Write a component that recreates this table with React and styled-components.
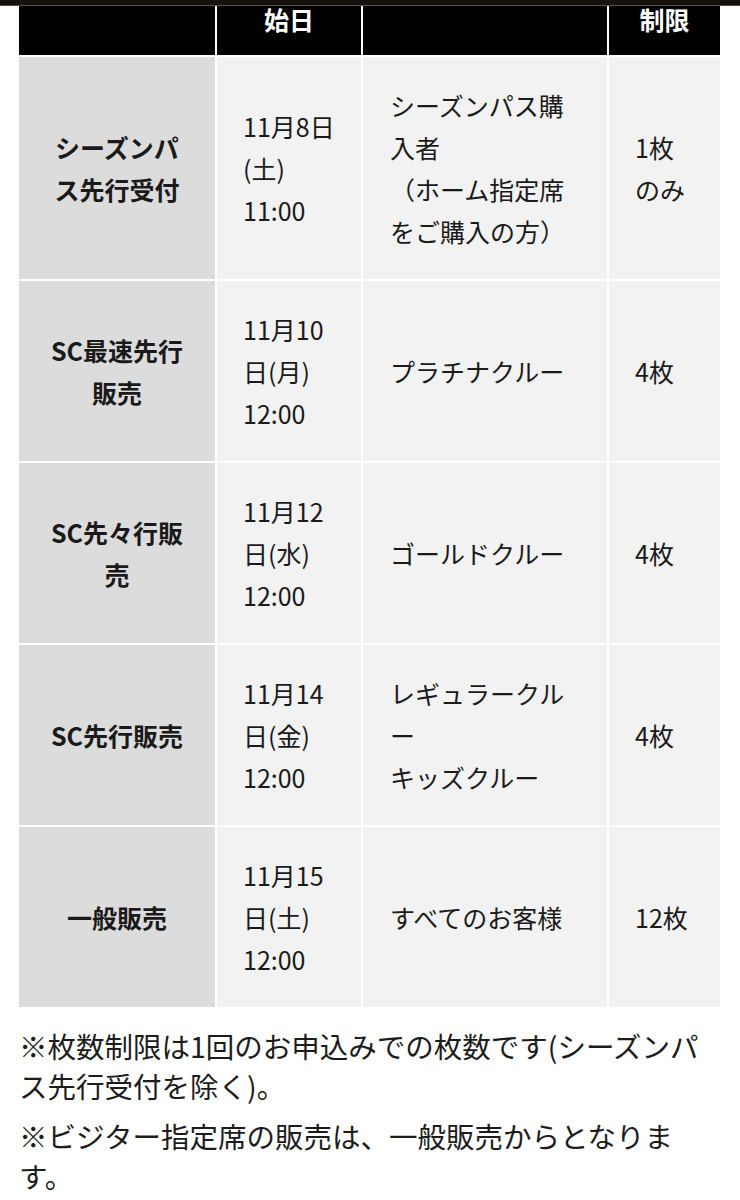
import React from "react";
import styled, { createGlobalStyle } from "styled-components";

const Global = createGlobalStyle`
  html, body { margin: 0; padding: 0; background: #ffffff; }
  body {
    font-family: "Noto Sans CJK JP", "Noto Sans", sans-serif;
    color: #1a1a1a;
  }
`;

const Page = styled.div`
  width: 740px;
  height: 1200px;
  overflow: hidden;
  display: flex;
  flex-direction: column;
`;

const TopBar = styled.div`
  height: 5px;
  flex: none;
  background: #17110d;
  border-bottom: 1px solid #57524d;
`;

const Content = styled.div`
  padding: 0 20px 0 19px;
  display: flex;
  flex-direction: column;
`;

const Table = styled.div`
  display: flex;
  flex-direction: column;
  gap: 2px;
`;

const Row = styled.div`
  display: grid;
  grid-template-columns: 196px 144px 244px 111px;
  column-gap: 2px;
`;

const HeadCell = styled.div`
  height: 49px;
  background: #000;
  color: #fff;
  font-weight: 700;
  font-size: 25px;
  line-height: 27px;
  text-align: center;
  padding-top: 0;
  box-sizing: border-box;
  white-space: nowrap;
`;

const Cell = styled.div`
  display: flex;
  align-items: center;
  justify-content: ${(p) => (p.$center ? "center" : "flex-start")};
  text-align: ${(p) => (p.$center ? "center" : "left")};
  background: ${(p) => (p.$label ? "#dcdcdc" : "#f2f2f2")};
  font-weight: ${(p) => (p.$label ? 700 : 400)};
  font-size: 25px;
  line-height: 42px;
  padding: 27px ${(p) => (p.$center ? "0" : "26px")};
  padding-left: ${(p) => (p.$center ? "0" : p.$pl || "26px")};
  white-space: nowrap;
  box-sizing: border-box;
  color: #1a1a1a;
`;

const Notes = styled.div`
  margin-top: 19px;
  display: flex;
  flex-direction: column;
  gap: 10px;
`;

const Note = styled.p`
  margin: 0;
  font-size: 28.5px;
  line-height: 40px;
  white-space: nowrap;
  color: #1c1c1c;
`;

const Lines = ({ lines }) =>
  lines.map((l, i) => (
    <React.Fragment key={i}>
      {i > 0 && <br />}
      {l}
    </React.Fragment>
  ));

const rows = [
  {
    label: ["シーズンパ", "ス先行受付"],
    date: ["11月8日", "(土)", "11:00"],
    target: ["シーズンパス購", "入者", "（ホーム指定席", "をご購入の方）"],
    limit: ["1枚", "のみ"],
  },
  {
    label: ["SC最速先行", "販売"],
    date: ["11月10", "日(月)", "12:00"],
    target: ["プラチナクルー"],
    limit: ["4枚"],
  },
  {
    label: ["SC先々行販", "売"],
    date: ["11月12", "日(水)", "12:00"],
    target: ["ゴールドクルー"],
    limit: ["4枚"],
  },
  {
    label: ["SC先行販売"],
    date: ["11月14", "日(金)", "12:00"],
    target: ["レギュラークル", "ー", "キッズクルー"],
    limit: ["4枚"],
  },
  {
    label: ["一般販売"],
    date: ["11月15", "日(土)", "12:00"],
    target: ["すべてのお客様"],
    limit: ["12枚"],
  },
];

export default function App() {
  return (
    <>
      <Global />
      <Page>
        <TopBar />
        <Content>
          <Table>
            <Row>
              <HeadCell />
              <HeadCell>始日</HeadCell>
              <HeadCell />
              <HeadCell>制限</HeadCell>
            </Row>
            {rows.map((r, i) => (
              <Row key={i}>
                <Cell $label $center>
                  <div>
                    <Lines lines={r.label} />
                  </div>
                </Cell>
                <Cell>
                  <div>
                    <Lines lines={r.date} />
                  </div>
                </Cell>
                <Cell $pl="27px">
                  <div>
                    <Lines lines={r.target} />
                  </div>
                </Cell>
                <Cell>
                  <div>
                    <Lines lines={r.limit} />
                  </div>
                </Cell>
              </Row>
            ))}
          </Table>
          <Notes>
            <Note>
              ※枚数制限は1回のお申込みでの枚数です(シーズンパ
              <br />
              ス先行受付を除く)。
            </Note>
            <Note>
              ※ビジター指定席の販売は、一般販売からとなりま
              <br />
              す。
            </Note>
          </Notes>
        </Content>
      </Page>
    </>
  );
}
